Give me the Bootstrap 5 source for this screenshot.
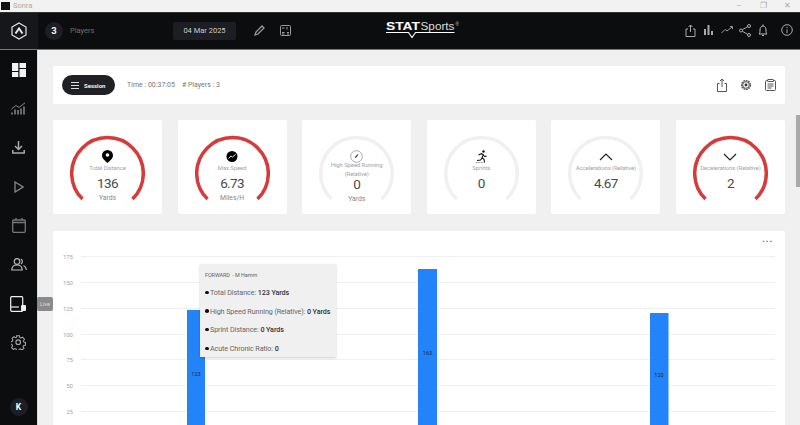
<!DOCTYPE html>
<html lang="en">
<head>
  <meta charset="UTF-8">
  <meta name="viewport" content="width=device-width, initial-scale=1">
  <title>Sonra</title>
  <link href="https://cdn.jsdelivr.net/npm/bootstrap@5.3.2/dist/css/bootstrap.min.css" rel="stylesheet">
  <style>
    html, body { height: 425px; overflow: hidden; }
    body { font-family: Roboto, "Liberation Sans", sans-serif; background: #f0f0f0; color: #444; }
    .win-bar { height: 13px; background: #f2f2f2; border-bottom: 1px solid #333; font-size: 7.5px; color: #aaa; }
    .win-logo { width: 9px; height: 8px; background: #111; margin: 0 3px 0 1px; }
    .win-ctrl { width: 24.5px; text-align: center; color: #aaa; font-size: 8px; line-height: 12px; }
    .app-bar { height: 37px; background: #0c0d0f; border-bottom: 1px solid #777; }
    .brand-cell { width: 38px; height: 36px; background: #15171b; }
    .num-circle { width: 18px; height: 18px; border-radius: 50%; background: #1d1f24; color: #f2f2f2; font-size: 9.5px; font-weight: 700; margin-left: 7px; }
    .players-lbl { font-size: 7.5px; color: #6f6f6f; width: 103px; margin-left: 7px; }
    .date-box { width: 63px; height: 18px; background: #1c1e23; border-radius: 2px; color: #ccc; font-size: 7.5px; }
    .brand-logo { position: absolute; left: 386px; top: 8px; }
    .top-icons { position: absolute; top: 12px; left: 0; }
    .top-ico { position: absolute; top: 0; }
    .side-bar { width: 38px; height: 375px; background: #0c0d0f; border-right: 1px solid #ddd; flex: none; }
    .side-item { height: 39px; position: relative; }
    .live-tip { position: absolute; left: 37px; top: 13px; background: #8a8a8a; color: #ddd; font-size: 5.5px; padding: 0 3px; height: 14px; line-height: 14px; border-radius: 2px; z-index: 3; }
    .user-circle { width: 18px; height: 18px; border-radius: 50%; background: #1d1f24; color: #fff; font-size: 8.5px; font-weight: 700; margin-bottom: 9px; }
    .main-area { padding: 16px 15px 0; width: 762px; flex: none; position: relative; }
    .panel { background: #fff; border-radius: 2px; }
    .session-panel { height: 38px; padding: 0 9.5px 0 9px; }
    .session-pill { width: 53px; height: 20px; background: #1f2125; border-radius: 10px; color: #f2f2f2; font-size: 6px; font-weight: 700; padding-left: 9px; gap: 5px; }
    .session-info { font-size: 7px; color: #777; margin-left: 12px; gap: 7px; }
    .session-tools { gap: 13px; }
    .stats-grid { display: grid; grid-template-columns: repeat(6, 109px); justify-content: space-between; margin: 16px 0 17px; }
    .stat-panel { height: 94px; position: relative; text-align: center; padding-top: 24px; }
    .gauge { position: absolute; left: 17px; top: 14px; }
    .stat-icon { height: 18px; position: relative; }
    .stat-label { font-size: 6px; letter-spacing: -.12px; line-height: 9px; color: #a3a3a8; height: 9px; margin-top: 1px; position: relative; }
    .stat-label-2 { font-size: 6px; letter-spacing: -.12px; line-height: 9px; color: #a3a3a8; position: relative; margin-top: -2px; height: 18px; }
    .stat-val { font-size: 13.5px; line-height: 16px; color: #4a4a4a; margin-top: 3px; letter-spacing: -.6px; position: relative; }
    .stat-val-2 { margin-top: -2px; }
    .stat-unit { font-size: 6.8px; line-height: 10px; color: #888; margin-top: 2px; position: relative; }
    .chart-panel { height: 200px; position: relative; }
    .chart-menu { position: absolute; right: 12px; top: 4px; font-size: 9px; line-height: 8px; letter-spacing: 1px; color: #666; font-weight: 700; }
    .chart-svg { position: absolute; left: 0; top: 0; }
    .chart-svg text { font-family: Roboto, "Liberation Sans", sans-serif; }
    .bar-tip { position: absolute; left: 147px; top: 33px; width: 136px; height: 93px; background: #f0f0f0; box-shadow: 0 1px 2px rgba(0,0,0,.2); padding: 5px; font-size: 7.2px; letter-spacing: -.1px; color: #666; }
    .tip-head { font-size: 5.5px; color: #666; height: 12px; line-height: 12px; margin-bottom: 3px; }
    .tip-row { height: 18.7px; line-height: 18.7px; white-space: nowrap; }
    .tip-row b { color: #333; font-weight: 500; }
    .tip-dot { display: inline-block; width: 3.5px; height: 3.5px; background: #111; border-radius: 50%; margin-right: 1.5px; vertical-align: 1px; }
    .page-scroll { position: absolute; right: 0; top: 115px; width: 4px; height: 72px; background: #a9a9a9; }
  </style>
</head>
<body>

<!-- WINDOW BAR -->
<div class="win-bar d-flex align-items-center">
  <span class="win-logo"></span><span>Sonra</span>
  <span class="ms-auto d-flex">
    <span class="win-ctrl">–</span><span class="win-ctrl">❐</span><span class="win-ctrl">✕</span>
  </span>
</div>

<!-- TOP BAR -->
<header class="app-bar d-flex align-items-center position-relative">
  <div class="brand-cell d-flex align-items-center justify-content-center">
    <svg width="16" height="18" viewBox="0 0 16 18" fill="none" stroke="#e8e8e8"><path d="M8 1l7 4v8l-7 4-7-4V5z" stroke-width="1.200"/><path d="M4.500 11.500L8 6.500l3.500 5" stroke-width="2"/></svg>
  </div>
  <div class="num-circle d-flex align-items-center justify-content-center">3</div>
  <div class="players-lbl">Players</div>
  <div class="date-box d-flex align-items-center justify-content-center">04 Mar 2025</div>

  <div class="top-icons">
    <svg class="top-ico" style="left:254px" width="11" height="11" viewBox="0 0 11 11" fill="none" stroke="#999" stroke-width="1.300"><path d="M1 10l1-3 6-6 2 2-6 6z"/></svg>
    <svg class="top-ico" style="left:280px" width="11" height="11" viewBox="0 0 11 11" fill="none" stroke="#999"><rect x=".5" y=".5" width="10" height="10" rx="1"/><path d="M2 3h2.500M7 2v2.500M2 7.500h2.500M2 9h2.500M7 7.500h2M7 9h2"/></svg>
    <svg class="top-ico" style="left:685px;top:-1px" width="11" height="13" viewBox="0 0 11 13" fill="none" stroke="#aaa"><path d="M3 5H1v7.500h9V5H8"/><path d="M5.500 8V1M3.500 3l2-2 2 2"/></svg>
    <svg class="top-ico" style="left:704px" width="9" height="11" viewBox="0 0 9 11" fill="#aaa"><rect x="0" y="4" width="2" height="6"/><rect x="3.500" y="0" width="2" height="10"/><rect x="7" y="6" width="2" height="4"/></svg>
    <svg class="top-ico" style="left:721px" width="12" height="10" viewBox="0 0 12 10" fill="none" stroke="#999"><path d="M.5 8L4 4.500 6 6l5-4M9 1.500h2.500V4"/></svg>
    <svg class="top-ico" style="left:739px;top:-1px" width="12" height="13" viewBox="0 0 12 13" fill="none" stroke="#aaa"><circle cx="2" cy="6.500" r="1.500"/><circle cx="10" cy="2" r="1.500"/><circle cx="10" cy="11" r="1.500"/><path d="M3.300 5.700l5.400-3M3.300 7.300l5.400 3"/></svg>
    <svg class="top-ico" style="left:758px;top:-1px" width="10" height="13" viewBox="0 0 10 13" fill="none" stroke="#bbb"><path d="M1 10c1-1 1-2 1-4s1-4 3-4 3 2 3 4 0 3 1 4z"/><path d="M4 11.500h2M5 .5V2"/></svg>
    <svg class="top-ico" style="left:781px;top:-1px" width="12" height="12" viewBox="0 0 12 12" fill="none" stroke="#aaa"><circle cx="6" cy="6" r="5.300"/><path d="M6 5.500V9M6 3v1.200"/></svg>
  </div>

  <svg class="brand-logo" width="75" height="18" viewBox="0 0 75 18">
    <text x="0" y="9" font-family="Liberation Sans" font-weight="700" font-size="11" fill="#fff" textLength="34" lengthAdjust="spacingAndGlyphs">STAT</text>
    <text x="34.500" y="9" font-family="Liberation Sans" font-size="11" fill="#ddd" textLength="34" lengthAdjust="spacingAndGlyphs">Sports</text>
    <text x="69.500" y="5" font-family="Liberation Sans" font-size="4.500" fill="#ccc">®</text>
    <path d="M0 11.500h22.500l3.500 5 3.500-5h39" fill="none" stroke="#fff" stroke-width="1.100"/>
  </svg>
</header>

<div class="d-flex">
  <!-- SIDEBAR -->
  <nav class="side-bar d-flex flex-column align-items-center">
    <div class="side-item w-100 d-flex align-items-center justify-content-center">
      <svg width="14" height="14" viewBox="0 0 14 14" fill="#f2f2f2"><rect width="6.300" height="8"/><rect x="7.500" width="6.500" height="5"/><rect y="9" width="6.300" height="5"/><rect x="7.500" y="6" width="6.500" height="8"/></svg>
    </div>
    <div class="side-item w-100 d-flex align-items-center justify-content-center">
      <svg width="15" height="13" viewBox="0 0 15 13" fill="none" stroke="#888"><path d="M.5 7L5 3.500 8 5.500 14 .8"/><path d="M1 12.500v-2M4 12.500V7.500M7 12.500V8M10 12.500V6.500M13 12.500V4.500" stroke-width="1.500"/></svg>
    </div>
    <div class="side-item w-100 d-flex align-items-center justify-content-center">
      <svg width="13" height="13" viewBox="0 0 13 13" fill="none" stroke="#aaa" stroke-width="1.500"><path d="M6.500 0v8M3 5l3.500 3.500L10 5"/><path d="M.8 9v3h11.400V9"/></svg>
    </div>
    <div class="side-item w-100 d-flex align-items-center justify-content-center">
      <svg width="10" height="12" viewBox="0 0 10 12" fill="none" stroke="#888" stroke-width="1.300"><path d="M1 1l8 5-8 5z"/></svg>
    </div>
    <div class="side-item w-100 d-flex align-items-center justify-content-center">
      <svg width="14" height="15" viewBox="0 0 14 15" fill="none" stroke="#777" stroke-width="1.300"><rect x=".7" y="2" width="12.600" height="12.300" rx="1"/><path d="M1 4.500h12M4 0v2M10 0v2"/></svg>
    </div>
    <div class="side-item w-100 d-flex align-items-center justify-content-center">
      <svg width="16" height="13" viewBox="0 0 16 13" fill="none" stroke="#bbb" stroke-width="1.200"><circle cx="6" cy="3.500" r="2.800"/><path d="M.8 12c0-3 2-5 5.200-5s5.200 2 5.200 5z"/><path d="M10 1a3 3 0 0 1 0 5M12.500 7.500c1.500.7 2.700 2.300 2.900 4.500"/></svg>
    </div>
    <div class="side-item w-100 d-flex align-items-center justify-content-center">
      <svg width="17" height="16" viewBox="0 0 17 16" fill="none" stroke="#f0f0f0" stroke-width="1.200"><rect x=".7" y=".7" width="12" height="14.600" rx="1"/><path d="M1 11h8"/><rect x="11" y="9" width="5" height="6" rx="1" fill="#f0f0f0" stroke="none"/></svg>
      <span class="live-tip">Live</span>
    </div>
    <div class="side-item w-100 d-flex align-items-center justify-content-center">
      <svg width="15" height="15" viewBox="0 0 15 15" fill="none" stroke="#aaa" stroke-width="1.100"><path d="M6 .7h3l.4 2 1.300.6 1.800-1 2 2.200-1.200 1.700.4 1.200 1.800.6v3l-2 .4-.6 1.300 1 1.800-2.100 1.600-1.700-1.200-1.300.5-.4 1.500H6l-.4-1.800-1.300-.6-1.800 1-1.900-2 1.100-1.700-.5-1.300-1.500-.4v-3l1.800-.4.600-1.300-1-1.700 2-2 1.700 1.100 1.200-.5z" transform="scale(.93)"/><circle cx="7.200" cy="7.200" r="2.300"/></svg>
    </div>
    <div class="user-circle d-flex align-items-center justify-content-center mt-auto">K</div>
  </nav>

  <!-- CONTENT -->
  <main class="main-area">
    <section class="panel session-panel d-flex align-items-center">
      <div class="session-pill d-flex align-items-center">
        <svg width="8" height="7" viewBox="0 0 8 7" fill="none" stroke="#ddd"><path d="M0 .5h8M0 3.500h8M0 6.500h8"/></svg>
        Session
      </div>
      <div class="session-info d-flex"><span>Time : 00:37:05</span><span># Players : 3</span></div>
      <div class="session-tools ms-auto d-flex align-items-center">
        <svg width="10" height="14" viewBox="0 0 10 14" fill="none" stroke="#555"><path d="M2.500 5.500H.5v8h9v-8h-2"/><path d="M5 9V1M3 3l2-2 2 2"/></svg>
        <svg width="12" height="14" viewBox="0 0 14 14" fill="none" stroke="#555" stroke-width="1.300"><circle cx="7" cy="7" r="5.300" stroke-dasharray="2.100 .9"/><circle cx="7" cy="7" r="3.800"/><circle cx="7" cy="7" r="1.700" fill="#333" stroke="none"/></svg>
        <svg width="11" height="12" viewBox="0 0 11 12" fill="none" stroke="#555"><rect x=".5" y="1.500" width="10" height="10" rx="1"/><rect x="3" y=".5" width="5" height="2" fill="#fff"/><path d="M2.500 5h6M2.500 7h6M2.500 9h4"/></svg>
      </div>
    </section>

    <section class="stats-grid">
      <div class="panel stat-panel">
        <svg class="gauge" width="75" height="70" viewBox="0 0 75 70"><path d="M12.500 65a35.800 35.800 0 1 1 50 0" fill="none" stroke="#d63a3a" stroke-width="3.500"/></svg>
        <div class="stat-icon"><svg width="11" height="13" viewBox="0 0 11 13"><path d="M5.500 0a5.500 5.500 0 0 1 5.500 5.500C11 8.500 7.500 11 5.500 13 3.500 11 0 8.500 0 5.500A5.500 5.500 0 0 1 5.500 0z" fill="#000"/><circle cx="5.500" cy="5" r="1.800" fill="#fff"/></svg></div>
        <div class="stat-label">Total Distance</div>
        <div class="stat-val">136</div>
        <div class="stat-unit">Yards</div>
      </div>
      <div class="panel stat-panel">
        <svg class="gauge" width="75" height="70" viewBox="0 0 75 70"><path d="M12.500 65a35.800 35.800 0 1 1 50 0" fill="none" stroke="#d63a3a" stroke-width="3.500"/></svg>
        <div class="stat-icon"><svg width="12" height="13" viewBox="0 0 12 12"><circle cx="6" cy="6" r="5.500" fill="#000"/><path d="M2.500 8L5 5.500l1.500 1L9.500 4" fill="none" stroke="#fff" stroke-width=".9"/></svg></div>
        <div class="stat-label">Max Speed</div>
        <div class="stat-val">6.73</div>
        <div class="stat-unit">Miles/H</div>
      </div>
      <div class="panel stat-panel">
        <svg class="gauge" width="75" height="70" viewBox="0 0 75 70"><path d="M12.500 65a35.800 35.800 0 1 1 50 0" fill="none" stroke="#f0f0f0" stroke-width="3.500"/></svg>
        <div class="stat-icon"><svg width="13" height="13" viewBox="0 0 13 13" fill="none" stroke="#888" stroke-width=".7"><circle cx="6.500" cy="6.500" r="5.800"/><path d="M5.300 7.700L8 4.500" stroke="#222" stroke-width="1.100"/></svg></div>
        <div class="stat-label-2">High Speed Running<br>(Relative)</div>
        <div class="stat-val stat-val-2">0</div>
        <div class="stat-unit">Yards</div>
      </div>
      <div class="panel stat-panel">
        <svg class="gauge" width="75" height="70" viewBox="0 0 75 70"><path d="M12.500 65a35.800 35.800 0 1 1 50 0" fill="none" stroke="#f0f0f0" stroke-width="3.500"/></svg>
        <div class="stat-icon"><svg width="11" height="13" viewBox="0 0 11 13" fill="none" stroke="#111" stroke-width="1.100"><circle cx="7.500" cy="1.500" r="1.200" fill="#111" stroke="none"/><path d="M2.500 5l3-1.300 1.800 1-1.300 3 2 1.500.5 2.800M6 8L4.500 10 1 10.500M7.300 5l1.300 1.500 2-.4"/><path d="M0 12.500h9" stroke-width=".5" stroke-dasharray="1 .6"/></svg></div>
        <div class="stat-label">Sprints</div>
        <div class="stat-val">0</div>
      </div>
      <div class="panel stat-panel">
        <svg class="gauge" width="75" height="70" viewBox="0 0 75 70"><path d="M12.500 65a35.800 35.800 0 1 1 50 0" fill="none" stroke="#f0f0f0" stroke-width="3.500"/></svg>
        <div class="stat-icon"><svg width="14" height="8" viewBox="0 0 14 8" fill="none" stroke="#222" stroke-width="1.200"><path d="M1 7l6-6 6 6"/></svg></div>
        <div class="stat-label">Accelerations (Relative)</div>
        <div class="stat-val">4.67</div>
      </div>
      <div class="panel stat-panel">
        <svg class="gauge" width="75" height="70" viewBox="0 0 75 70"><path d="M12.500 65a35.800 35.800 0 1 1 50 0" fill="none" stroke="#d63a3a" stroke-width="3.500"/></svg>
        <div class="stat-icon"><svg width="14" height="8" viewBox="0 0 14 8" fill="none" stroke="#222" stroke-width="1.200"><path d="M1 1l6 6 6-6"/></svg></div>
        <div class="stat-label">Decelerations (Relative)</div>
        <div class="stat-val">2</div>
      </div>
    </section>

    <section class="panel chart-panel">
      <svg class="chart-svg" width="732" height="200" viewBox="0 0 732 200">
        <g stroke="#f0f0f0">
          <path d="M28 25.500h694M28 51.500h694M28 77.500h694M28 103.500h694M28 128.500h694M28 154.500h694M28 180.500h694"/>
        </g>
        <g font-size="6" fill="#a5a5a5" text-anchor="end">
          <text x="20" y="28">175</text><text x="20" y="54">150</text><text x="20" y="80">125</text><text x="20" y="106">100</text><text x="20" y="131">75</text><text x="20" y="157">50</text><text x="20" y="183">25</text>
        </g>
        <g fill="#2383f8">
          <rect x="134" y="79" width="18" height="121"/>
          <rect x="365" y="38" width="19" height="162"/>
          <rect x="597" y="82" width="18.500" height="118"/>
        </g>
        <g font-size="5.500" fill="#1a2a40" text-anchor="middle">
          <text x="143" y="145">123</text><text x="374.500" y="124">163</text><text x="606" y="146">120</text>
        </g>
      </svg>
      <div class="chart-menu">...</div>
      <div class="bar-tip">
        <div class="tip-head">FORWARD &nbsp;- M Hamm</div>
        <div class="tip-row"><span class="tip-dot"></span>Total Distance: <b>123 Yards</b></div>
        <div class="tip-row"><span class="tip-dot"></span>High Speed Running (Relative): <b>0 Yards</b></div>
        <div class="tip-row"><span class="tip-dot"></span>Sprint Distance: <b>0 Yards</b></div>
        <div class="tip-row"><span class="tip-dot"></span>Acute Chronic Ratio: <b>0</b></div>
      </div>
    </section>
  </main>
</div>
<div class="page-scroll"></div>

<script src="https://cdn.jsdelivr.net/npm/bootstrap@5.3.2/dist/js/bootstrap.bundle.min.js"></script>
</body>
</html>
